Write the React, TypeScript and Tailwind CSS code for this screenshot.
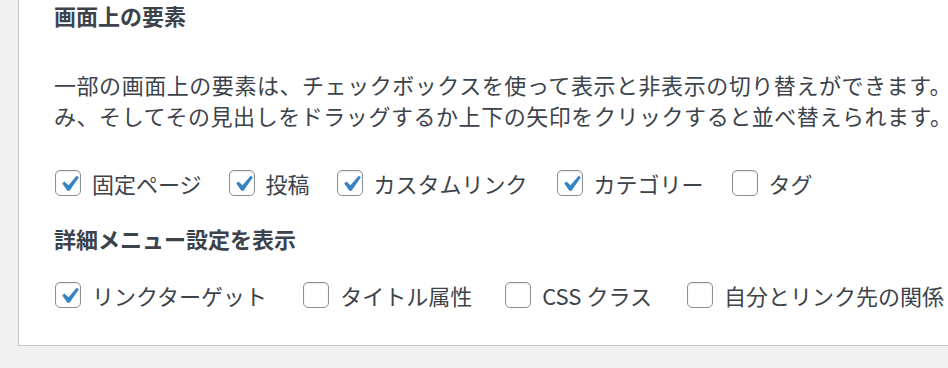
import React from "react";

const Check = () => (
  <svg viewBox="0 0 20 20" className="absolute left-[-3px] top-[-3px] w-[32px] h-[32px]">
    <path d="M14.83 4.89l1.34.94-5.81 8.38H9.02L5.78 9.67l1.34-1.25 2.57 2.4z" fill="#3582c4" />
  </svg>
);

function Box({ checked, label, mr }: { checked: boolean; label: string; mr: string }) {
  return (
    <label className={`flex items-center ${mr}`}>
      <span className="relative w-[26px] h-[26px] rounded-[5px] border border-[#8c8f94] bg-white shadow-[inset_0_1px_2px_rgba(0,0,0,0.1)] shrink-0">
        {checked && <Check />}
      </span>
      <span className="ml-[11px] whitespace-nowrap">{label}</span>
    </label>
  );
}

export default function App() {
  return (
    <div
      className="w-[948px] h-[368px] bg-[#f0f0f1] overflow-hidden text-[#3c434a]"
      style={{ fontFamily: '"Noto Sans CJK JP", "Noto Sans", sans-serif' }}
    >
      <div className="ml-[18px] h-[346px] bg-white border-l border-b border-[#c3c4c7] pl-[35px] overflow-hidden">
        <div className="text-[22px] font-bold leading-[30px]">画面上の要素</div>
        <div className="mt-[39px] text-[22px] tracking-[0.55px] leading-[31px] whitespace-nowrap">
          <div>一部の画面上の要素は、チェックボックスを使って表示と非表示の切り替えができます。</div>
          <div>み、そしてその見出しをドラッグするか上下の矢印をクリックすると並べ替えられます。</div>
        </div>
        <div className="mt-[37px] flex text-[22px] leading-[30px] pl-[1px]">
          <Box checked label="固定ページ" mr="mr-[27px]" />
          <Box checked label="投稿" mr="mr-[27px]" />
          <Box checked label="カスタムリンク" mr="mr-[29px]" />
          <Box checked label="カテゴリー" mr="mr-[28px]" />
          <Box checked={false} label="タグ" mr="mr-[28px]" />
        </div>
        <div className="mt-[25px] text-[22px] font-bold leading-[30px]">詳細メニュー設定を表示</div>
        <div className="mt-[27px] flex text-[22px] leading-[30px] pl-[1px]">
          <Box checked label="リンクターゲット" mr="mr-[36px]" />
          <Box checked={false} label="タイトル属性" mr="mr-[33px]" />
          <Box checked={false} label="CSS クラス" mr="mr-[35px]" />
          <Box checked={false} label="自分とリンク先の関係 (XFN)" mr="mr-[28px]" />
        </div>
      </div>
    </div>
  );
}
